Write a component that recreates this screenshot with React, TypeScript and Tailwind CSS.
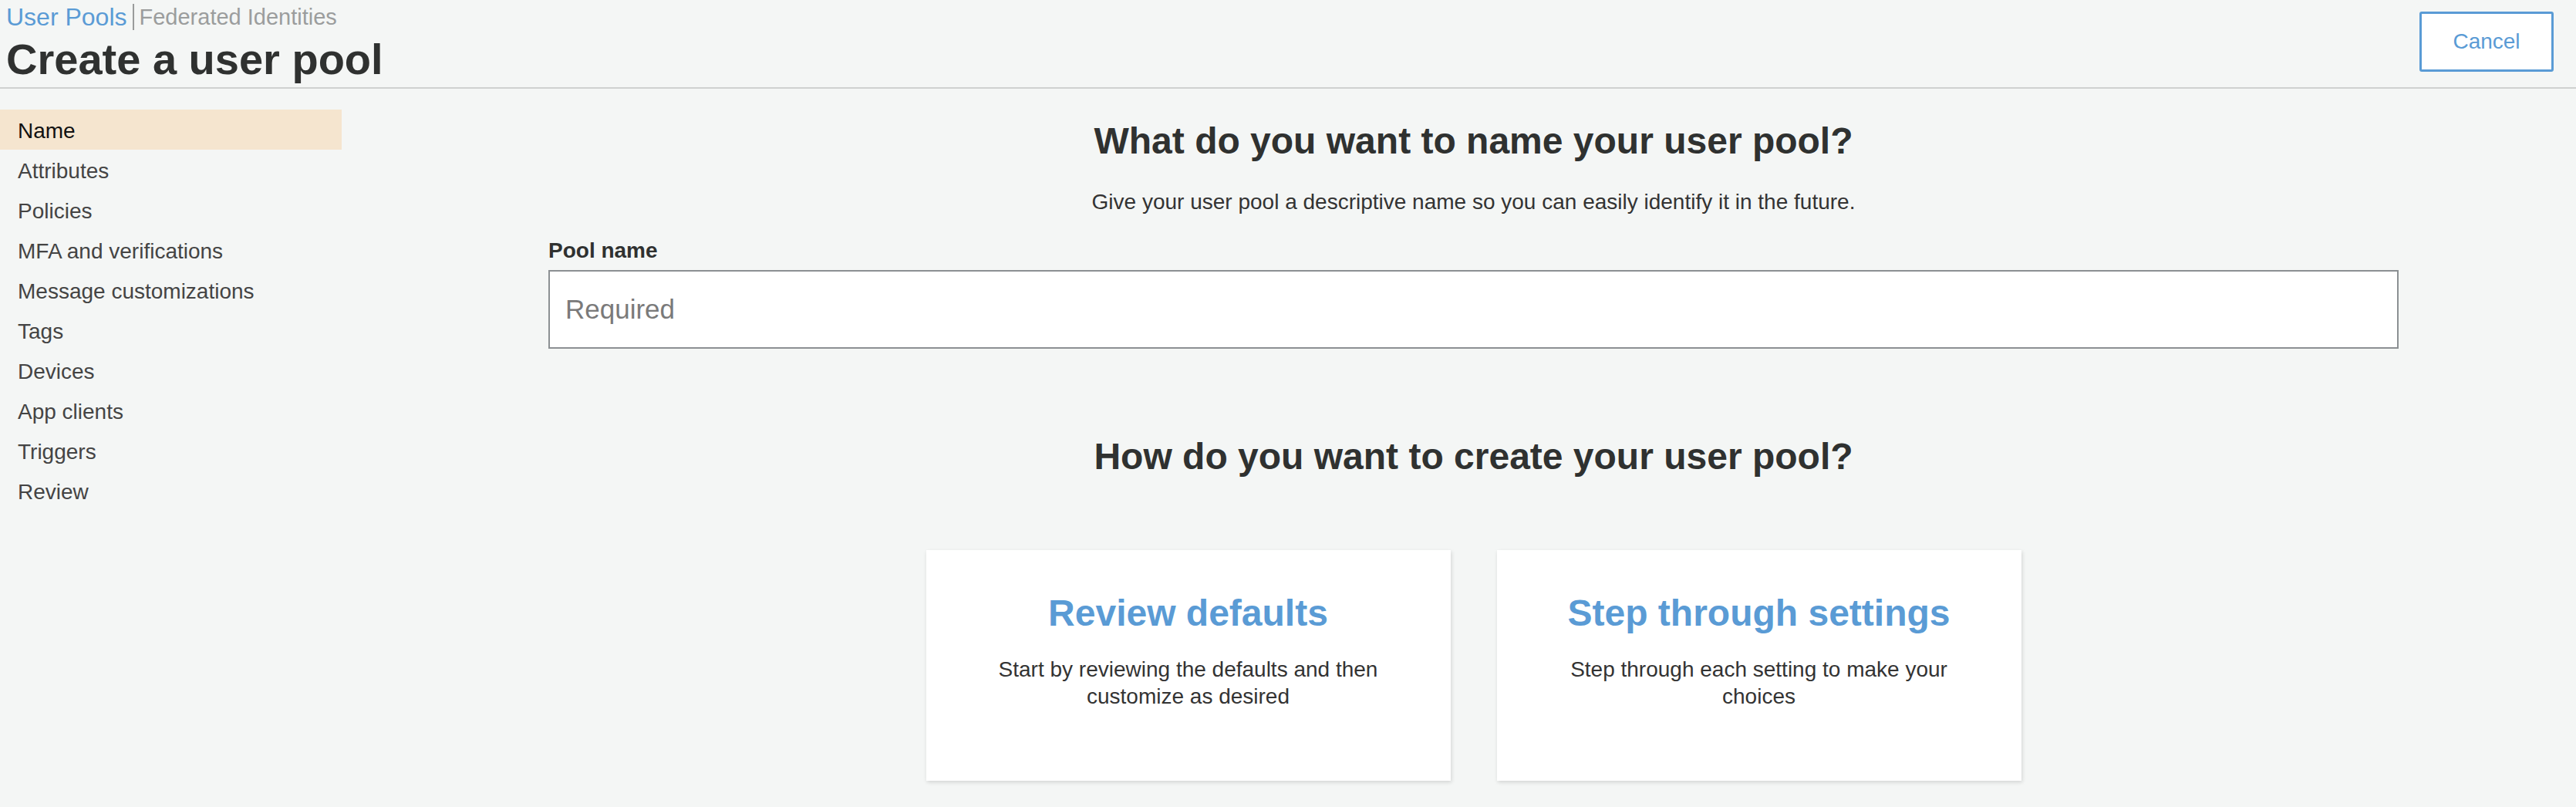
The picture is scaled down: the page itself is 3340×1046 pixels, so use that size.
import React from "react";

const navItems = [
  "Name",
  "Attributes",
  "Policies",
  "MFA and verifications",
  "Message customizations",
  "Tags",
  "Devices",
  "App clients",
  "Triggers",
  "Review",
];

function Card({ title, desc }: { title: string; desc: string }) {
  return (
    <div className="flex h-[299px] w-[680px] flex-col items-center bg-white px-[60px] pt-[53px] text-center shadow-[1px_2px_5px_rgba(0,0,0,0.14)]">
      <div className="text-[48px] font-bold leading-[58px] text-[#5a9bd5]">{title}</div>
      <div className="mt-[26px] text-[28px] leading-[35px] text-[#333333]">{desc}</div>
    </div>
  );
}

export default function App() {
  return (
    <div
      className="min-h-screen w-full bg-[#f4f6f5] text-[#333333]"
      style={{ fontFamily: "'Liberation Sans', Arial, Helvetica, sans-serif" }}
    >
      {/* Header */}
      <header className="flex items-start justify-between border-b-2 border-[#cfd1d0]">
        <div className="pl-[8px] pt-[4px] pb-[6px]">
          <div className="flex items-center text-[32px] leading-[36px]">
            <span className="text-[#5a9bd5]">User Pools</span>
            <span className="ml-[7px] mr-[7px] h-[34px] w-[2px] bg-[#9a9c9c]" />
            <span className="text-[29px] text-[#9b9d9d]">Federated Identities</span>
          </div>
          <h1 className="mt-[7px] text-[56px] font-bold leading-[60px] text-[#2f3130]">
            Create a user pool
          </h1>
        </div>
        <button className="mr-[29px] mt-[15px] flex h-[78px] w-[174px] items-center justify-center rounded-[3px] border-[3px] border-[#5a9bd5] bg-white text-[28px] text-[#5a9bd5]">
          Cancel
        </button>
      </header>

      <div className="flex">
        {/* Sidebar */}
        <nav className="w-[443px] shrink-0 pt-[27px]">
          {navItems.map((item, i) => (
            <div
              key={item}
              className={
                i === 0
                  ? "flex h-[52px] items-center bg-[#f5e5cf] pl-[23px] pt-[3px] text-[28px] text-[#111111]"
                  : "flex h-[52px] items-center pl-[23px] pt-[3px] text-[28px] text-[#444444]"
              }
            >
              {item}
            </div>
          ))}
        </nav>

        {/* Main */}
        <main className="flex-1 pl-[268px] pr-[230px]">
          <div className="flex flex-col">
            <h2 className="mt-[39px] text-center text-[48px] font-bold leading-[58px] text-[#2f3130]">
              What do you want to name your user pool?
            </h2>
            <p className="mt-[30px] text-center text-[28px] leading-[39px] text-[#333333]">
              Give your user pool a descriptive name so you can easily identify it in the future.
            </p>
            <label className="mt-[24px] text-[28px] font-bold leading-[39px] text-[#2f3130]">
              Pool name
            </label>
            <input
              className="mt-[6px] h-[102px] w-full border-2 border-[#8c9093] bg-white px-[20px] text-[35px] text-[#333333] outline-none placeholder:text-[#7a7a7a]"
              placeholder="Required"
              style={{ fontFamily: "'Liberation Sans', Arial, Helvetica, sans-serif" }}
            />
            <h2 className="mt-[111px] text-center text-[48px] font-bold leading-[58px] text-[#2f3130]">
              How do you want to create your user pool?
            </h2>
            <div className="mt-[92px] flex justify-center gap-[60px]">
              <Card
                title="Review defaults"
                desc="Start by reviewing the defaults and then customize as desired"
              />
              <Card
                title="Step through settings"
                desc="Step through each setting to make your choices"
              />
            </div>
          </div>
        </main>
      </div>
    </div>
  );
}
